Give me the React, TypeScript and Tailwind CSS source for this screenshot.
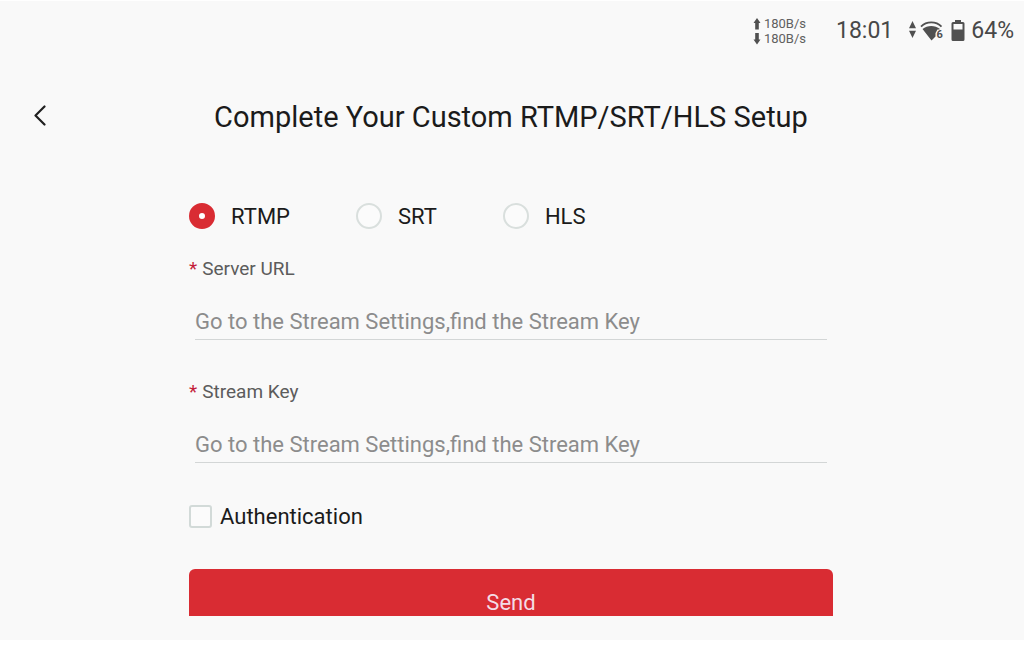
import { useState } from "react";

const protocols = ["RTMP", "SRT", "HLS"];

function RateArrow({ down = false }: { down?: boolean }) {
  return (
    <svg width="8" height="12" viewBox="0 0 8 12" fill="#505050" aria-hidden="true">
      <path d={down ? "M2.200 0H5.800V6.500H7.500L4 11.500L0.500 6.500H2.200Z" : "M4 0L7.500 5H5.800V11.500H2.200V5H0.500Z"} />
    </svg>
  );
}

function StatusBar() {
  return (
    <div className="flex h-[60px] items-center justify-end pr-[10px] text-[#484848]">
      <div className="mr-[30px] flex flex-col text-[13px] leading-[15px] text-[#606060]">
        <span className="flex items-center gap-[3px]">
          <RateArrow />
          180B/s
        </span>
        <span className="flex items-center gap-[3px]">
          <RateArrow down />
          180B/s
        </span>
      </div>
      <span className="mr-[15px] text-[23px] leading-8">18:01</span>
      <svg width="36" height="22" viewBox="0 0 36 22" className="mr-[7px]" aria-hidden="true">
        <path d="M4.500 1L8 8.300H1Z M1 10.700H8L4.500 18Z" fill="#505050" />
        <path d="M13 6.600C18.500 1 28 1 33.500 6.600" fill="none" stroke="#505050" strokeWidth="1.800" />
        <path d="M14.500 9C19.500 5 27 5 32 9L31 9.500H29.500L27.500 13V16.500L23.500 20.500Z" fill="#505050" />
        <text x="28.500" y="18" fontFamily="Roboto, sans-serif" fontSize="11" fontWeight="700" fill="#505050">
          6
        </text>
      </svg>
      <svg width="14" height="22" viewBox="0 0 14 22" className="mr-[6px]" aria-hidden="true">
        <path
          fillRule="evenodd"
          fill="#505050"
          d="M4 0H10V2H12Q13.500 2 13.500 3.500V19.500Q13.500 21 12 21H2Q0.500 21 0.500 19.500V3.500Q0.500 2 2 2H4Z M2.500 4V9.500H11.500V4Z"
        />
      </svg>
      <span className="text-[23px] leading-8">64%</span>
    </div>
  );
}

function Field({ id, label }: { id: string; label: string }) {
  return (
    <div className="flex flex-col">
      <label htmlFor={id} className="flex gap-[5px] text-[19px] leading-6 text-[#5c5c5c]">
        <span className="text-[#c41e3a]">*</span>
        {label}
      </label>
      <input
        id={id}
        type="text"
        placeholder="Go to the Stream Settings,find the Stream Key"
        className="mx-[6px] mt-[23px] h-[36px] border-b border-[#d3d6d6] bg-transparent text-[22px] text-[#222] outline-none placeholder:text-[#8c8c8c]"
      />
    </div>
  );
}

export default function App() {
  const [protocol, setProtocol] = useState("RTMP");

  return (
    <div className="flex min-h-screen flex-col bg-white pt-px pb-[5px] font-['Roboto',sans-serif]">
      <main className="flex flex-1 flex-col bg-[#f9f9f9]">
        <StatusBar />
        <header className="flex h-28 items-center px-7">
          <button type="button" aria-label="Back" className="flex size-6 items-start justify-center">
            <svg width="14" height="21" viewBox="0 0 14 21" fill="none" stroke="#202020" strokeWidth="2.200" strokeLinecap="round" strokeLinejoin="round">
              <path d="M11.500 1.500L2.500 10.500L11.500 19.500" />
            </svg>
          </button>
          <h1 className="flex-1 pr-[26px] text-center text-[29px] leading-9 text-[#1b1b1b]">
            Complete Your Custom RTMP/SRT/HLS Setup
          </h1>
        </header>
        <div className="pr-[2px]">
          <form className="mx-auto flex w-[63%] flex-col pt-[26px]" onSubmit={(e) => e.preventDefault()}>
            <fieldset className="flex gap-[66px]">
              {protocols.map((name) => (
                <label key={name} className="flex items-center gap-4 text-[22px] leading-8 text-[#1b1b1b]">
                  <input
                    type="radio"
                    name="protocol"
                    checked={protocol === name}
                    onChange={() => setProtocol(name)}
                    className="size-[26px] appearance-none rounded-full border-2 border-[#d9dfdd] bg-[#fbfbfb] checked:border-[10px] checked:border-[#d92c33] checked:bg-white"
                  />
                  <span className="pt-0.5">{name}</span>
                </label>
              ))}
            </fieldset>
            <div className="flex flex-col gap-10 pt-6">
              <Field id="server-url" label="Server URL" />
              <Field id="stream-key" label="Stream Key" />
            </div>
            <label className="mt-9 flex items-center gap-2 text-[22px] leading-8 text-[#1b1b1b]">
              <input
                type="checkbox"
                className="size-[23px] appearance-none rounded-[3px] border-2 border-[#d2dad8] bg-[#fbfbfb] checked:bg-[#d92c33]"
              />
              <span className="pt-0.5">Authentication</span>
            </label>
            <div className="mt-9 h-[47px] overflow-hidden">
              <button type="submit" className="h-[66px] w-full rounded-md bg-[#d92c33] text-[22px] text-[#f4dce6]">
                Send
              </button>
            </div>
          </form>
        </div>
      </main>
    </div>
  );
}
